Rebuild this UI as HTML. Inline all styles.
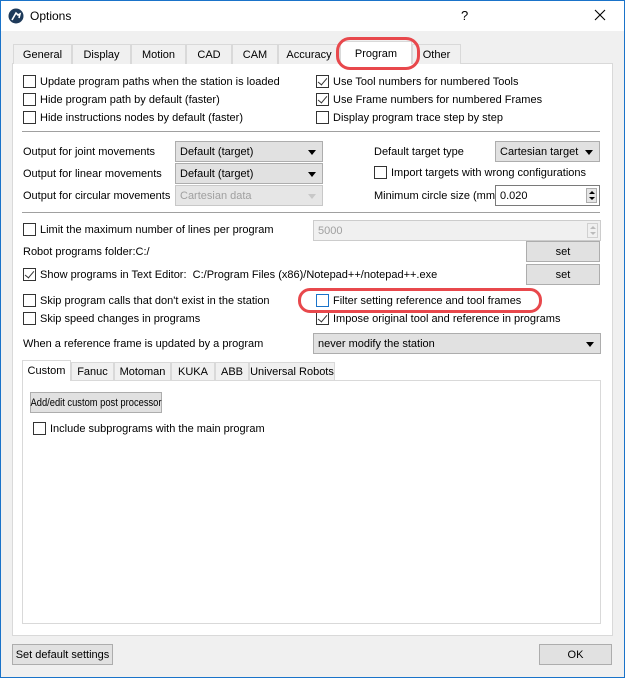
<!DOCTYPE html>
<html><head><style>
*{box-sizing:border-box;margin:0;padding:0}
body{width:625px;height:678px;background:#f0f0f0;font-family:"Liberation Sans",sans-serif;font-size:11px;color:#000;position:relative;overflow:hidden}
.a{position:absolute;white-space:nowrap}
.t{margin-top:1px}
.win{position:absolute;left:0;top:0;width:625px;height:678px;border:1px solid #1a73c9}
.title{position:absolute;left:1px;top:1px;width:623px;height:30px;background:#fff}
.cb{position:absolute;width:13px;height:13px;border:1px solid #333;background:#fff}
.cb.on::after{content:"";position:absolute;left:3px;top:0px;width:4px;height:8px;border:solid #333;border-width:0 1.5px 1.5px 0;transform:rotate(40deg)}
.combo{position:absolute;height:21px;background:#e1e1e1;border:1px solid #adadad;padding:4px 4px;white-space:nowrap}
.combo::after{content:"";position:absolute;right:6px;top:8px;border-left:4px solid transparent;border-right:4px solid transparent;border-top:5px solid #000}
.combo.dis{color:#a0a0a0;background:#e6e6e6;border-color:#c8c8c8}
.combo.dis::after{border-top-color:#c8c8c8}
.btn{position:absolute;height:21px;background:#e1e1e1;border:1px solid #adadad;text-align:center;padding-top:4px;white-space:nowrap}
.tab{position:absolute;height:20px;border:1px solid #d9d9d9;border-bottom:none;background:#f0f0f0;text-align:center;padding-top:4px;white-space:nowrap}
.tab.sel{background:#fff;height:23px}
.sep{position:absolute;height:1px;background:#a0a0a0}
.spin{position:absolute;height:21px;background:#fff;border:1px solid #7a7a7a;padding:4px 4px}
.spin .b{position:absolute;right:2px;top:2px;width:11px;height:15px;border:1px solid #adadad;background:#e5e5e5}
.spin .b::before{content:"";position:absolute;left:2px;top:2px;border-left:3px solid transparent;border-right:3px solid transparent;border-bottom:3px solid #000}
.spin .b::after{content:"";position:absolute;left:2px;top:8px;border-left:3px solid transparent;border-right:3px solid transparent;border-top:3px solid #000}
.spin.dis .b::before{border-bottom-color:#bbb}.spin.dis .b::after{border-top-color:#bbb}
.ell{position:absolute;border:3px solid #e8484c;border-radius:50%}
</style></head><body>
<div class="win"></div>
<div class="title"></div>
<svg class="a" style="left:8px;top:8px" width="16" height="16"><circle cx="8" cy="8" r="7.5" fill="#1e3a5a"/><path d="M4 12 L8 5 L10 7 L12 6 L11 10" stroke="#fff" stroke-width="1.6" fill="none"/></svg>
<div class="a" style="left:30px;top:9px;font-size:12px">Options</div>
<div class="a" style="left:461px;top:8px;font-size:13px">?</div>
<svg class="a" style="left:594px;top:9px" width="12" height="12"><path d="M1 1L11 11M11 1L1 11" stroke="#000" stroke-width="1.1"/></svg>

<div class="a" style="left:12px;top:63px;width:601px;height:573px;background:#fff;border:1px solid #d9d9d9"></div>
<div class="tab" style="left:13px;top:44px;width:59px">General</div>
<div class="tab" style="left:72px;top:44px;width:59px">Display</div>
<div class="tab" style="left:131px;top:44px;width:55px">Motion</div>
<div class="tab" style="left:186px;top:44px;width:46px">CAD</div>
<div class="tab" style="left:232px;top:44px;width:46px">CAM</div>
<div class="tab" style="left:278px;top:44px;width:62px">Accuracy</div>
<div class="tab sel" style="left:340px;top:41px;width:72px;padding-top:6px">Program</div>
<div class="tab" style="left:412px;top:44px;width:49px">Other</div>
<div class="ell" style="left:336px;top:37px;width:84px;height:33px;border-radius:14px"></div>

<div class="cb" style="left:23px;top:75px"></div><div class="a t" style="left:40px;top:75px">Update program paths when the station is loaded</div>
<div class="cb" style="left:23px;top:93px"></div><div class="a t" style="left:40px;top:93px">Hide program path by default (faster)</div>
<div class="cb" style="left:23px;top:111px"></div><div class="a t" style="left:40px;top:111px">Hide instructions nodes by default (faster)</div>
<div class="cb on" style="left:316px;top:75px"></div><div class="a t" style="left:333px;top:75px">Use Tool numbers for numbered Tools</div>
<div class="cb on" style="left:316px;top:93px"></div><div class="a t" style="left:333px;top:93px">Use Frame numbers for numbered Frames</div>
<div class="cb" style="left:316px;top:111px"></div><div class="a t" style="left:333px;top:111px">Display program trace step by step</div>
<div class="sep" style="left:22px;top:131px;width:578px"></div>

<div class="a" style="left:23px;top:146px">Output for joint movements</div>
<div class="combo" style="left:175px;top:141px;width:148px">Default (target)</div>
<div class="a" style="left:23px;top:168px">Output for linear movements</div>
<div class="combo" style="left:175px;top:163px;width:148px">Default (target)</div>
<div class="a" style="left:23px;top:190px">Output for circular movements</div>
<div class="combo dis" style="left:175px;top:185px;width:148px">Cartesian data</div>
<div class="a" style="left:374px;top:146px">Default target type</div>
<div class="combo" style="left:495px;top:141px;width:105px">Cartesian target</div>
<div class="cb" style="left:374px;top:166px"></div><div class="a t" style="left:391px;top:166px">Import targets with wrong configurations</div>
<div class="a" style="left:374px;top:190px">Minimum circle size (mm)</div>
<div class="spin" style="left:495px;top:185px;width:105px">0.020<div class="b"></div></div>
<div class="sep" style="left:22px;top:212px;width:578px"></div>

<div class="cb" style="left:23px;top:223px"></div><div class="a t" style="left:40px;top:223px">Limit the maximum number of lines per program</div>
<div class="spin dis" style="left:313px;top:220px;width:288px;background:#f0f0f0;border-color:#ccc;color:#a0a0a0">5000<div class="b" style="border-color:#d0d0d0;background:#f0f0f0"></div></div>
<div class="a" style="left:23px;top:246px">Robot programs folder:C:/</div>
<div class="btn" style="left:526px;top:241px;width:74px">set</div>
<div class="cb on" style="left:23px;top:268px"></div><div class="a t" style="left:40px;top:268px">Show programs in Text Editor:&nbsp; C:/Program Files (x86)/Notepad++/notepad++.exe</div>
<div class="btn" style="left:526px;top:264px;width:74px">set</div>

<div class="cb" style="left:23px;top:294px"></div><div class="a t" style="left:40px;top:294px">Skip program calls that don't exist in the station</div>
<div class="cb" style="left:23px;top:312px"></div><div class="a t" style="left:40px;top:312px">Skip speed changes in programs</div>
<div class="cb" style="left:316px;top:294px;border-color:#1a73c9"></div><div class="a t" style="left:333px;top:294px">Filter setting reference and tool frames</div>
<div class="cb on" style="left:316px;top:312px"></div><div class="a t" style="left:333px;top:312px">Impose original tool and reference in programs</div>
<div class="ell" style="left:298px;top:288px;width:244px;height:25px;border-radius:12px"></div>
<div class="a" style="left:23px;top:338px">When a reference frame is updated by a program</div>
<div class="combo" style="left:313px;top:333px;width:288px">never modify the station</div>

<div class="a" style="left:22px;top:380px;width:579px;height:244px;background:#fff;border:1px solid #d9d9d9"></div>
<div class="tab sel" style="left:22px;top:360px;width:49px;height:21px;padding-top:4px">Custom</div>
<div class="tab" style="left:71px;top:362px;width:43px;height:18px;padding-top:3px">Fanuc</div>
<div class="tab" style="left:114px;top:362px;width:57px;height:18px;padding-top:3px">Motoman</div>
<div class="tab" style="left:171px;top:362px;width:44px;height:18px;padding-top:3px">KUKA</div>
<div class="tab" style="left:215px;top:362px;width:34px;height:18px;padding-top:3px">ABB</div>
<div class="tab" style="left:249px;top:362px;width:86px;height:18px;padding-top:3px">Universal Robots</div>
<div class="btn" style="left:30px;top:392px;width:132px"><span style="position:absolute;left:50%;top:4px;transform:translateX(-50%) scaleX(0.85)">Add/edit custom post processor</span></div>
<div class="cb" style="left:33px;top:422px"></div><div class="a t" style="left:50px;top:422px">Include subprograms with the main program</div>

<div class="btn" style="left:12px;top:644px;width:101px">Set default settings</div>
<div class="btn" style="left:539px;top:644px;width:73px">OK</div>
</body></html>
